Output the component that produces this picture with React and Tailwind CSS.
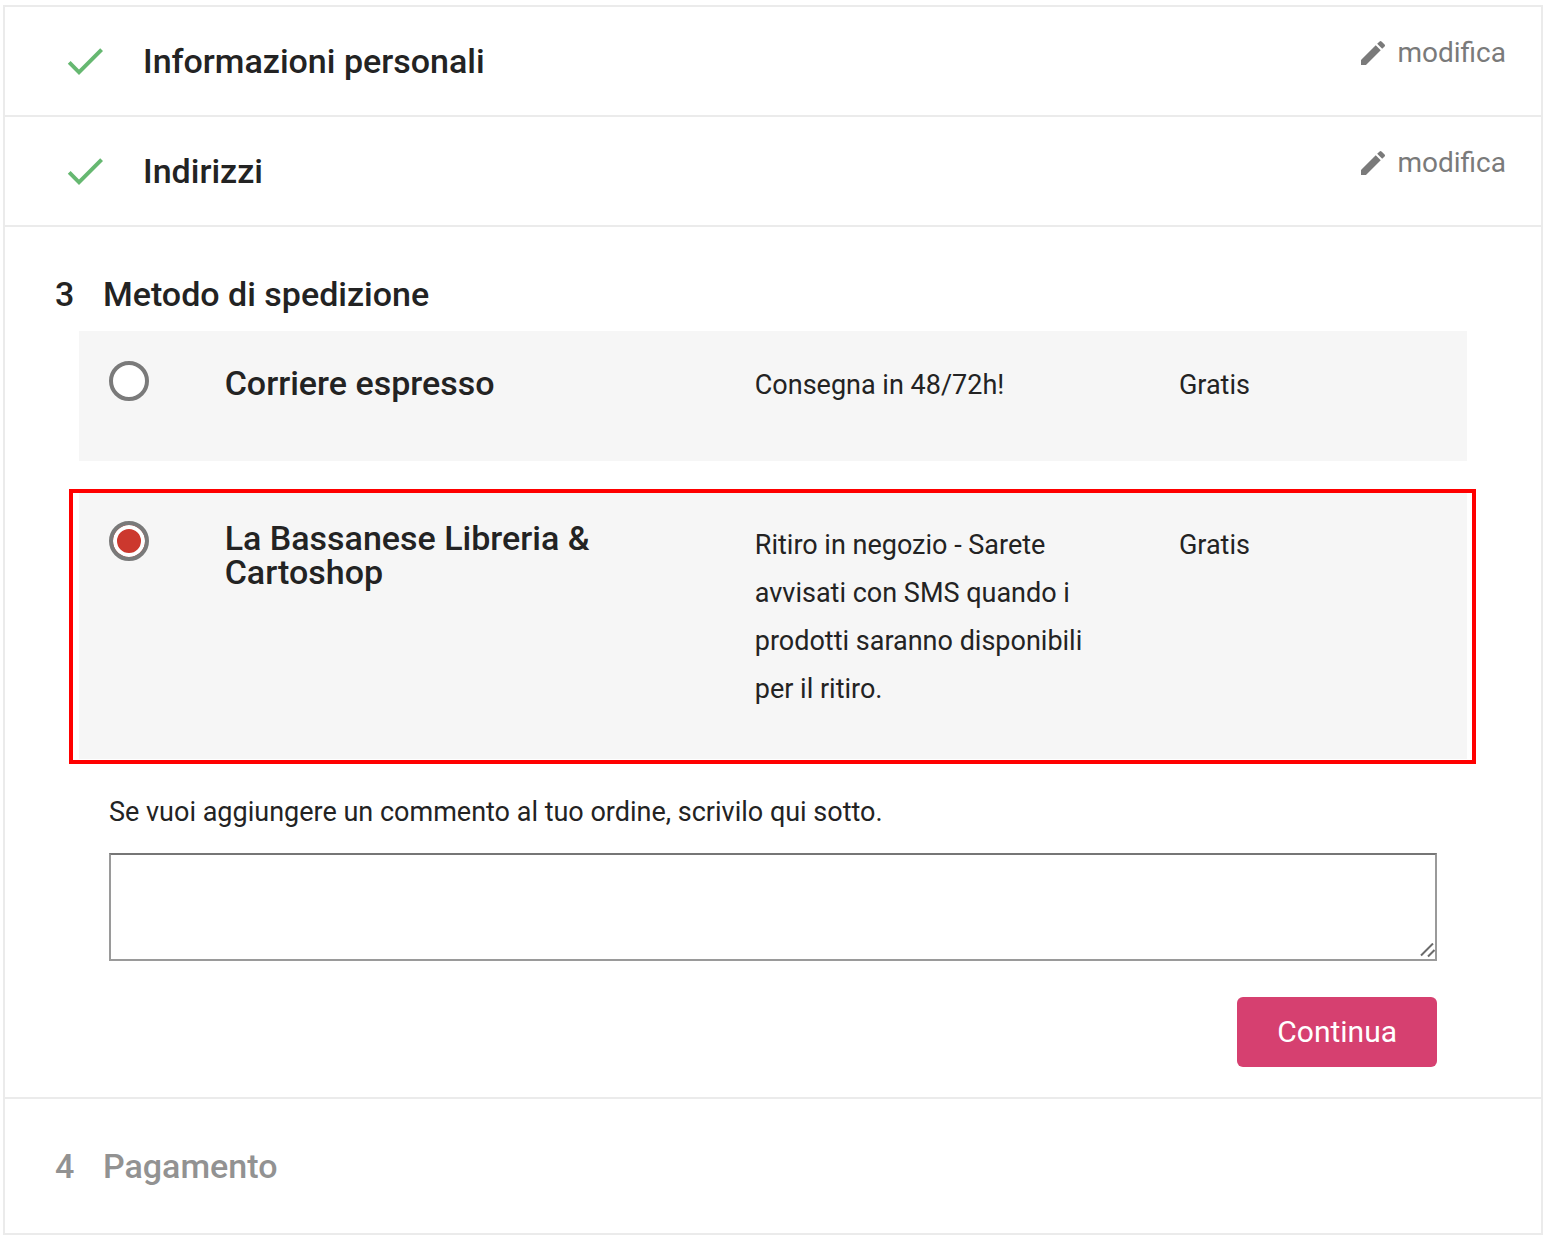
import { useState } from "react";
import { MdDone, MdEdit } from "react-icons/md";

const carriers = [
  {
    id: "express",
    name: "Corriere espresso",
    delay: "Consegna in 48/72h!",
    price: "Gratis",
  },
  {
    id: "store",
    name: "La Bassanese Libreria & Cartoshop",
    delay: "Ritiro in negozio - Sarete avvisati con SMS quando i prodotti saranno disponibili per il ritiro.",
    price: "Gratis",
  },
];

function CompletedStep({ title }) {
  return (
    <section className="flex items-start border-b-2 border-[#ebebeb] py-[30px] pl-14 pr-[35px]">
      <MdDone className="h-12 w-12 shrink-0 text-[#66b871]" aria-hidden="true" />
      <h1 className="ml-[34px] flex-1 text-[34px] font-medium leading-[48px]">{title}</h1>
      <button type="button" className="flex items-center gap-2 text-[28px] leading-8 text-[#7a7a7a]">
        <MdEdit className="h-8 w-8" aria-hidden="true" />
        modifica
      </button>
    </section>
  );
}

function StepTitle({ number, children }) {
  return (
    <h1 className="flex pl-[50px] text-[34px] font-medium leading-[34px]">
      <span className="w-12 shrink-0">{number}</span>
      {children}
    </h1>
  );
}

function CarrierOption({ carrier, checked, onSelect }) {
  return (
    <div className={`border-4 pl-[6px] pr-[5px] ${checked ? "border-[#ff0000] pb-px" : "border-transparent"}`}>
      <div
        className={`grid grid-cols-[1fr_11fr] bg-[#f6f6f6] ${
          checked ? "pb-[46px] pt-7" : "pb-[52px] pt-[30px]"
        }`}
      >
        <div className="pl-[30px]">
          <input
            type="radio"
            name="delivery"
            id={`delivery-${carrier.id}`}
            checked={checked}
            onChange={() => onSelect(carrier.id)}
            className="block h-10 w-10 appearance-none rounded-full border-4 border-[#7a7a7a] bg-white checked:bg-[#cc382e] checked:shadow-[inset_0_0_0_4px_white]"
          />
        </div>
        <label htmlFor={`delivery-${carrier.id}`} className="grid grid-cols-12 items-start">
          <span className="col-span-5 flex min-h-11 items-center px-[30px] text-[34px] font-medium leading-[34px]">
            {carrier.name}
          </span>
          <span className="col-span-4 px-[30px] text-[27px] leading-[48px]">{carrier.delay}</span>
          <span className="col-span-3 px-[30px] text-[27px] leading-[48px]">{carrier.price}</span>
        </label>
      </div>
    </div>
  );
}

export default function App() {
  const [selected, setSelected] = useState("store");
  const [comment, setComment] = useState("");

  return (
    <main className="bg-white px-[3px] py-[5px] font-['Roboto',sans-serif] text-[#232323]">
      <div className="border-2 border-[#ebebeb]">
        <CompletedStep title="Informazioni personali" />
        <CompletedStep title="Indirizzi" />

        {/* Shipping method */}
        <section className="border-b-2 border-[#ebebeb] pb-[30px] pt-[50px]">
          <StepTitle number="3">Metodo di spedizione</StepTitle>
          <form onSubmit={(e) => e.preventDefault()}>
            <div className="mt-4 flex flex-col gap-6 pl-16 pr-[65px]">
              {carriers.map((carrier) => (
                <CarrierOption
                  key={carrier.id}
                  carrier={carrier}
                  checked={selected === carrier.id}
                  onSelect={setSelected}
                />
              ))}
            </div>

            <div className="mt-6 px-[104px]">
              <label htmlFor="delivery-message" className="block text-[27px] leading-[48px]">
                Se vuoi aggiungere un commento al tuo ordine, scrivilo qui sotto.
              </label>
              <div className="relative mt-[17px]">
                <textarea
                  id="delivery-message"
                  value={comment}
                  onChange={(e) => setComment(e.target.value)}
                  className="block h-[108px] w-full resize-none border-2 border-[#9a9a9a] border-t-[#767676] bg-white p-1 text-[27px]"
                />
                <svg
                  className="pointer-events-none absolute bottom-0.5 right-0.5 h-4 w-4"
                  viewBox="0 0 16 16"
                  fill="none"
                  stroke="#6b6b6b"
                  strokeWidth="2"
                  aria-hidden="true"
                >
                  <path d="M2 12.5 14 0.5M9 13.5 15.5 7" />
                </svg>
              </div>
              <div className="mt-9 flex justify-end">
                <button
                  type="submit"
                  className="rounded-md bg-[#d64070] px-10 py-[15px] text-[30px] leading-10 text-white"
                >
                  Continua
                </button>
              </div>
            </div>
          </form>
        </section>

        {/* Payment, not reachable yet */}
        <section className="py-[50px] text-[#929292]">
          <StepTitle number="4">Pagamento</StepTitle>
        </section>
      </div>
    </main>
  );
}
